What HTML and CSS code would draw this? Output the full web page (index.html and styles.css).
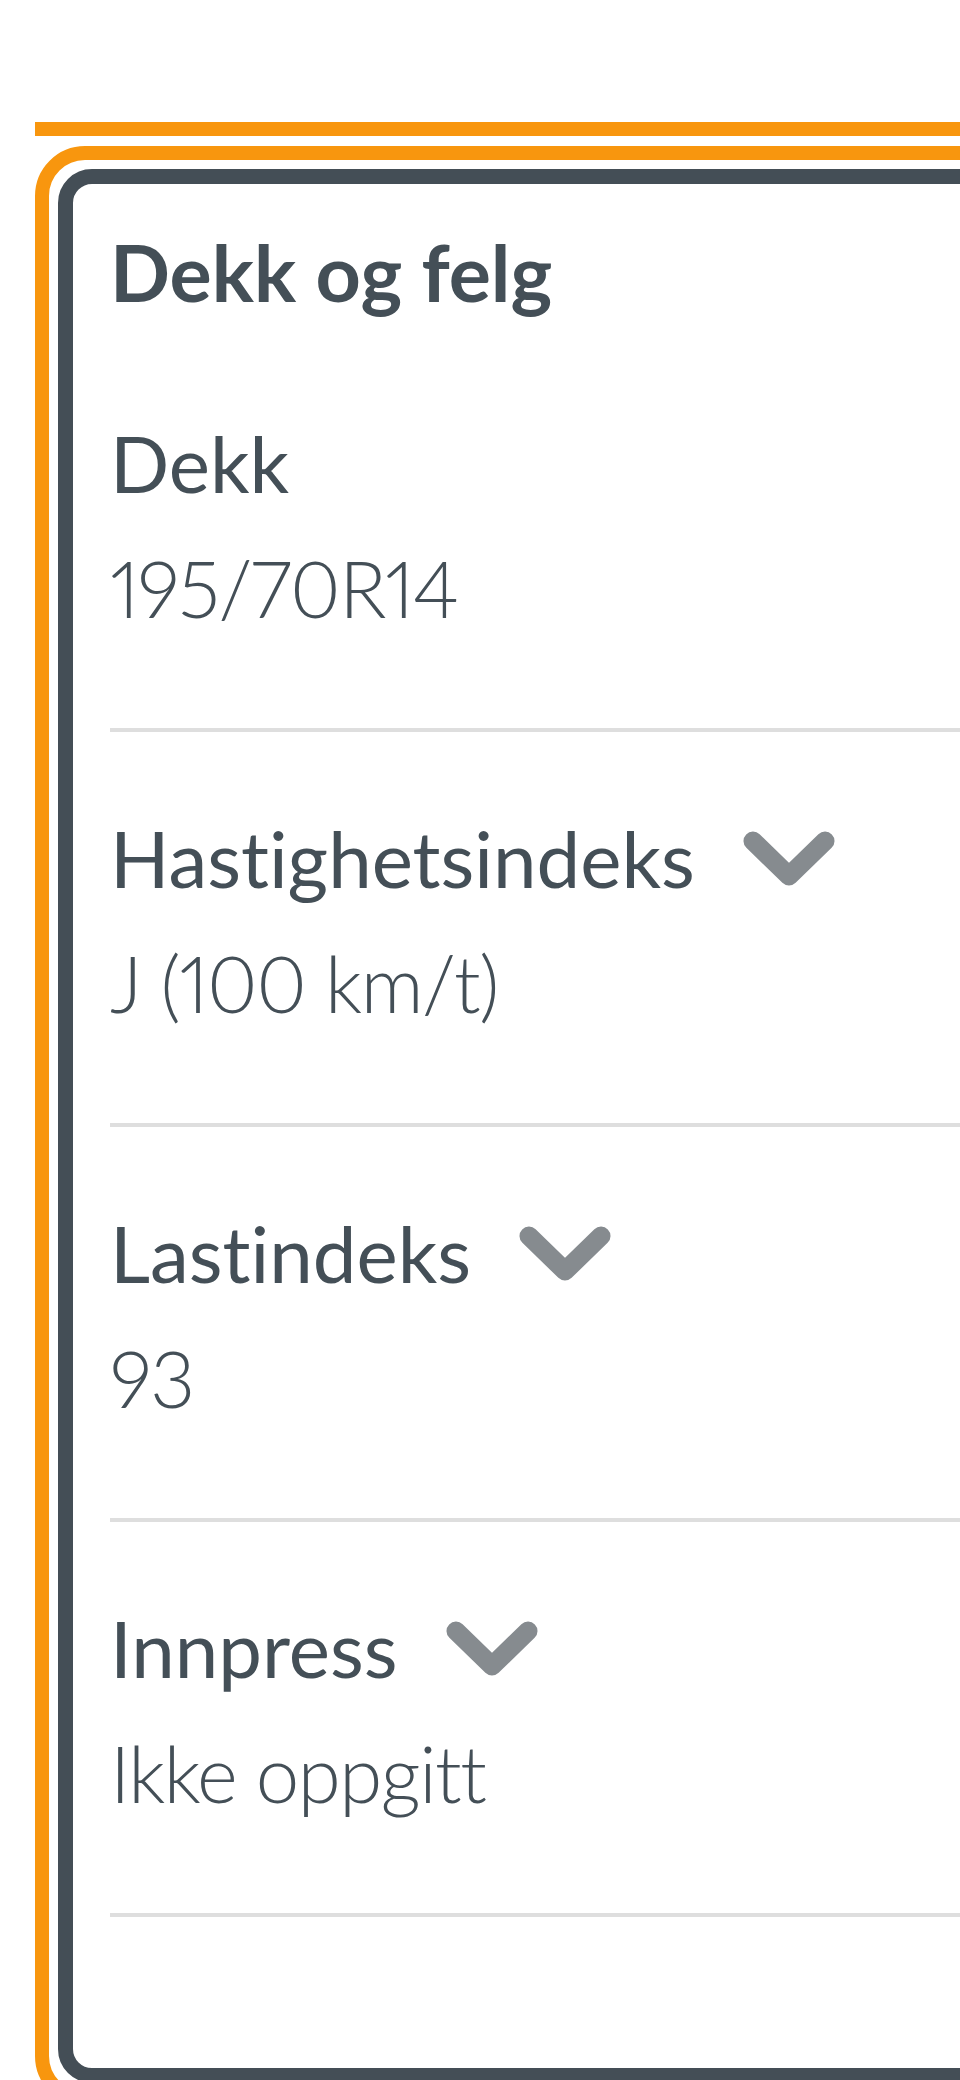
FILE: index.html
```html
<!DOCTYPE html>
<html lang="no">
<head>
    <meta charset="UTF-8">
    <meta name="viewport" content="width=device-width, initial-scale=1.0">
    <title>Dekk og felg</title>
    <link rel="stylesheet" href="styles.css">
</head>
<body>
    <div class="page">
        <div class="top-rule"></div>

        <section class="card-frame">
            <div class="card">
                <h2 class="card-title">Dekk og felg</h2>

                <dl class="specs">
                    <div class="spec">
                        <dt class="spec-label">Dekk</dt>
                        <dd class="spec-value">195/70R14</dd>
                    </div>

                    <div class="spec">
                        <dt class="spec-label">
                            Hastighetsindeks
                            <svg class="chevron" width="92" height="57" viewBox="0 0 92 57" aria-hidden="true">
                                <polyline points="10,10 46,45 82,10" />
                            </svg>
                        </dt>
                        <dd class="spec-value">J (100 km/t)</dd>
                    </div>

                    <div class="spec">
                        <dt class="spec-label">
                            Lastindeks
                            <svg class="chevron" width="92" height="57" viewBox="0 0 92 57" aria-hidden="true">
                                <polyline points="10,10 46,45 82,10" />
                            </svg>
                        </dt>
                        <dd class="spec-value">93</dd>
                    </div>

                    <div class="spec">
                        <dt class="spec-label">
                            Innpress
                            <svg class="chevron" width="92" height="57" viewBox="0 0 92 57" aria-hidden="true">
                                <polyline points="10,10 46,45 82,10" />
                            </svg>
                        </dt>
                        <dd class="spec-value">Ikke oppgitt</dd>
                    </div>
                </dl>
            </div>
        </section>
    </div>
</body>
</html>
```

FILE: styles.css
```css
html,
body {
    margin: 0;
    padding: 0;
    overflow: hidden;
    background: #fff;
}

body {
    font-family: Lato, "Noto Sans", sans-serif;
    font-variant-ligatures: none;
    color: #444f57;
}

.page {
    width: 1100px;
    padding: 122px 0 0 35px;
}

.top-rule {
    height: 14px;
    background-color: #f8960e;
    margin-bottom: 10px;
}

.card-frame {
    border: 14px solid #f8960e;
    border-radius: 50px;
    padding: 9px;
}

.card {
    border: 15px solid #444e56;
    border-radius: 34px;
    padding: 41px 0 151px 37px;
}

.card-title {
    margin: 0 0 18px;
    font-size: 79px;
    font-weight: 700;
    line-height: 94px;
}

.specs {
    margin: 0;
}

.spec {
    padding: 64px 0 77px;
    border-bottom: 4px solid #dedede;
}

.spec-label,
.spec-value {
    margin: 0;
    font-size: 78px;
    line-height: 125px;
}

.spec-label {
    font-weight: 400;
}

.spec-value {
    font-weight: 300;
    font-variant-numeric: proportional-nums;
    letter-spacing: -1.5px;
}

.chevron {
    margin-left: 28px;
}

.chevron polyline {
    fill: none;
    stroke: #868b8f;
    stroke-width: 19;
    stroke-linecap: round;
    stroke-linejoin: round;
}
```
